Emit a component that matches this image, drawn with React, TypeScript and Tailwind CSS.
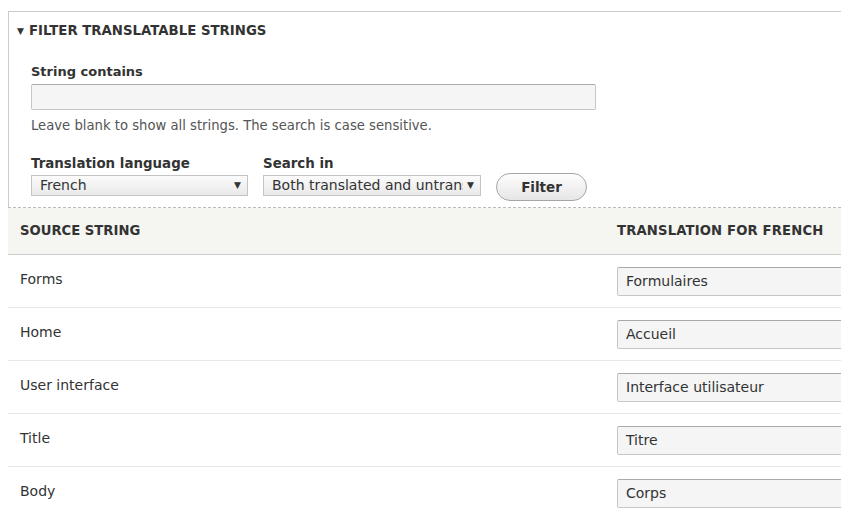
import React from 'react';

const font = { fontFamily: '"DejaVu Sans", sans-serif' };

const rows = [
  { source: 'Forms', translation: 'Formulaires' },
  { source: 'Home', translation: 'Accueil' },
  { source: 'User interface', translation: 'Interface utilisateur' },
  { source: 'Title', translation: 'Titre' },
  { source: 'Body', translation: 'Corps' },
];

const Select: React.FC<{ value: string; width: string }> = ({ value, width }) => (
  <div
    className={`${width} h-[21px] flex items-center pl-[8px] pr-[6px] border border-[#c4c4c4] bg-gradient-to-b from-[#fbfbfb] to-[#e9e9e9] text-[14px] text-[#333] whitespace-nowrap`}
  >
    <span className="flex-1 min-w-0 overflow-hidden">{value}</span>
    <span className="text-[9px] text-[#333] pl-[4px]">▼</span>
  </div>
);

export default function App() {
  return (
    <div className="w-[841px] h-[517px] bg-white overflow-hidden text-[#333]" style={font}>
      <div className="pt-[11px] pl-[8px]">
        <div className="border-t border-l border-[#ccc] pb-[6px]">
          <div className="pl-[8px] pt-[9px] text-[13.3px] font-bold">
            <span className="text-[9px] mr-[5px] relative top-[-1px]">▼</span>FILTER TRANSLATABLE STRINGS
          </div>
          <div className="pl-[22px] pt-[23px]">
            <div className="text-[13px] font-bold leading-[16px]">String contains</div>
            <div className="mt-[4px] w-[565px] h-[26px] border border-[#c6c6c6] border-t-[#a9a9a9] rounded-[2px] bg-[#f5f5f5]" />
            <div className="mt-[8px] text-[13.2px] text-[#555] leading-[16px]">
              Leave blank to show all strings. The search is case sensitive.
            </div>
            <div className="mt-[22px] flex items-start gap-[15px]">
              <div>
                <div className="text-[13.4px] font-bold leading-[16px]">Translation language</div>
                <div className="mt-[3px]">
                  <Select value="French" width="w-[217px]" />
                </div>
              </div>
              <div>
                <div className="text-[13.4px] font-bold leading-[16px]">Search in</div>
                <div className="mt-[3px]">
                  <Select value="Both translated and untranslated strings" width="w-[218px]" />
                </div>
              </div>
              <div className="pt-[17px]">
                <button className="w-[91px] h-[28px] rounded-full border border-[#a6a6a6] bg-gradient-to-b from-[#fdfdfd] to-[#e6e6e6] text-[13.5px] font-bold text-[#333]">
                  Filter
                </button>
              </div>
            </div>
          </div>
        </div>
        <div className="border-t border-dashed border-[#bbb]" />
        <div className="bg-[#f5f5f2] h-[47px] flex items-center text-[13.2px] font-bold border-b border-[#ccc]">
          <div className="w-[597px] pl-[12px]">SOURCE STRING</div>
          <div className="pl-[12px] tracking-[0.15px]">TRANSLATION FOR FRENCH</div>
        </div>
        {rows.map((r, i) => (
          <div
            key={r.source}
            className={`flex h-[53px] ${i < rows.length - 1 ? 'border-b border-[#e8e8e5]' : ''}`}
          >
            <div className="w-[597px] pl-[12px] pt-[15px] text-[14px] leading-[18px]">{r.source}</div>
            <div className="flex-1 pl-[12px] pt-[12px] overflow-hidden">
              <div className="w-[240px] h-[29px] flex items-center pl-[8px] border border-[#c6c6c6] border-t-[#a9a9a9] rounded-[2px] bg-[#f5f5f5] text-[14px] whitespace-nowrap">
                {r.translation}
              </div>
            </div>
          </div>
        ))}
      </div>
    </div>
  );
}
